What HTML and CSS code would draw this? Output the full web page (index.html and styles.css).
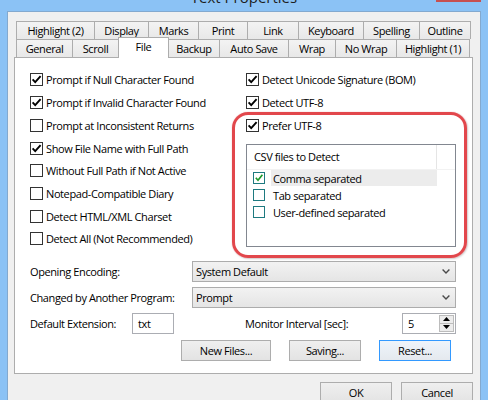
FILE: index.html
```html
<!DOCTYPE html>
<html>
<head>
<meta charset="utf-8">
<title>Text Properties</title>
<link rel="stylesheet" href="styles.css">
</head>
<body>
<div class="window">
  <div class="titlebar">
    <span class="title">Text Properties</span>
    <span class="close"></span>
  </div>
  <div class="client">
    <div class="tabctl">
      <div class="tabrow row1">
        <div class="tab w-hl2">Highlight (2)</div>
        <div class="tab w-display">Display</div>
        <div class="tab w-marks">Marks</div>
        <div class="tab w-print">Print</div>
        <div class="tab w-link">Link</div>
        <div class="tab w-keyboard">Keyboard</div>
        <div class="tab w-spelling">Spelling</div>
        <div class="tab w-outline last">Outline</div>
      </div>
      <div class="tabrow row2">
        <div class="tab w-general">General</div>
        <div class="tab w-scroll">Scroll</div>
        <div class="tab w-file selected">File</div>
        <div class="tab w-backup after-sel">Backup</div>
        <div class="tab w-autosave">Auto Save</div>
        <div class="tab w-wrap">Wrap</div>
        <div class="tab w-nowrap">No Wrap</div>
        <div class="tab w-hl1 last">Highlight (1)</div>
      </div>
      <div class="panel">
        <div class="opts">
          <div class="col">
            <div class="chk"><span class="box"><svg viewBox="0 0 11 11"><path d="M1.6 5.4 L4.2 8.2 L9.6 2.2"/></svg></span>Prompt if Null Character Found</div>
            <div class="chk"><span class="box"><svg viewBox="0 0 11 11"><path d="M1.6 5.4 L4.2 8.2 L9.6 2.2"/></svg></span>Prompt if Invalid Character Found</div>
            <div class="chk"><span class="box"></span>Prompt at Inconsistent Returns</div>
            <div class="chk"><span class="box"><svg viewBox="0 0 11 11"><path d="M1.6 5.4 L4.2 8.2 L9.6 2.2"/></svg></span>Show File Name with Full Path</div>
            <div class="chk"><span class="box"></span>Without Full Path if Not Active</div>
            <div class="chk"><span class="box"></span>Notepad-Compatible Diary</div>
            <div class="chk"><span class="box"></span>Detect HTML/XML Charset</div>
            <div class="chk"><span class="box"></span>Detect All (Not Recommended)</div>
          </div>
          <div class="col">
            <div class="chk"><span class="box"><svg viewBox="0 0 11 11"><path d="M1.6 5.4 L4.2 8.2 L9.6 2.2"/></svg></span>Detect Unicode Signature (BOM)</div>
            <div class="chk"><span class="box"><svg viewBox="0 0 11 11"><path d="M1.6 5.4 L4.2 8.2 L9.6 2.2"/></svg></span>Detect UTF-8</div>
            <div class="chk"><span class="box"><svg viewBox="0 0 11 11"><path d="M1.6 5.4 L4.2 8.2 L9.6 2.2"/></svg></span>Prefer UTF-8</div>
            <div class="listbox">
              <div class="lv-head"><span class="lv-col">CSV files to Detect</span></div>
              <div class="lv-item"><span class="lbox"><svg viewBox="0 0 10 10"><path d="M1.8 4.8 L4 7.2 L8.4 1.8"/></svg></span><span class="lv-text sel">Comma separated</span></div>
              <div class="lv-item"><span class="lbox"></span><span class="lv-text">Tab separated</span></div>
              <div class="lv-item"><span class="lbox"></span><span class="lv-text">User-defined separated</span></div>
            </div>
          </div>
        </div>
        <div class="form">
          <div class="frow">
            <span class="flabel">Opening Encoding:</span>
            <div class="combo"><span>System Default</span><svg class="chev" viewBox="0 0 8 5"><path d="M0.6 0.6 L4 4 L7.4 0.6"/></svg></div>
          </div>
          <div class="frow">
            <span class="flabel">Changed by Another Program:</span>
            <div class="combo"><span>Prompt</span><svg class="chev" viewBox="0 0 8 5"><path d="M0.6 0.6 L4 4 L7.4 0.6"/></svg></div>
          </div>
          <div class="frow">
            <span class="flabel short">Default Extension:</span>
            <div class="edit ext">txt</div>
            <span class="mlabel">Monitor Interval [sec]:</span>
            <div class="edit spin"><span class="spinval">5</span>
              <div class="spinbtns">
                <span class="sbtn"><svg viewBox="0 0 7 4"><path d="M0 4 L3.5 0 L7 4 Z"/></svg></span>
                <span class="sbtn"><svg viewBox="0 0 7 4"><path d="M0 0 L3.5 4 L7 0 Z"/></svg></span>
              </div>
            </div>
          </div>
          <div class="frow btnrow">
            <button class="btn wide">New Files...</button>
            <button class="btn">Saving...</button>
            <button class="btn focus">Reset...</button>
          </div>
        </div>
        <div class="annot"></div>
      </div>
      <div class="dlgbtns">
        <button class="btn dlg">OK</button>
        <button class="btn dlg">Cancel</button>
      </div>
    </div>
  </div>
</div>
</body>
</html>
```

FILE: styles.css
```css
* { box-sizing: border-box; }
html, body { margin: 0; padding: 0; }
body {
  background: #8bc2f5;
  width: 488px;
  height: 400px;
  overflow: hidden;
  font-family: "Segoe UI", "Open Sans", sans-serif;
  font-size: 11px;
  letter-spacing: -0.4px;
  color: #000;
}
.window { padding: 0 7px; }
.titlebar {
  height: 11px;
  margin: 0 -7px;
  display: grid;
  overflow: hidden;
}
.titlebar > * { grid-area: 1 / 1; }
.title {
  justify-self: center;
  font-size: 15px;
  line-height: 15px;
  margin-top: -10px;
  letter-spacing: 0;
  color: #1e1e1e;
}
.close {
  justify-self: end;
  align-self: start;
  width: 45px;
  height: 2px;
  margin-right: 7px;
  background: #c75050;
}
.client {
  background: #f0f0f0;
  border: 1px solid #83a9cf;
  border-bottom: 0;
  height: 400px;
  padding: 9px 7px 0 6px;
}
.tabrow {
  display: flex;
  height: 18px;
  margin-left: 2px;
}
.row2 { align-items: flex-end; }
.tab {
  height: 18px;
  border: 1px solid #adadad;
  border-right: 0;
  border-bottom: 0;
  background: linear-gradient(#f3f3f3, #e8e8e8);
  display: flex;
  align-items: center;
  justify-content: center;
  white-space: nowrap;
  line-height: 1;
}
.tab.last { border-right: 1px solid #adadad; }
.tab.selected {
  height: 21px;
  margin-bottom: -1px;
  background: #fff;
  border-right: 1px solid #adadad;
  position: relative;
  z-index: 2;
  padding-bottom: 3px;
}
.tab.after-sel { border-left: 0; }
.w-hl2 { width: 78px; }
.w-display { width: 54px; }
.w-marks { width: 50px; }
.w-print { width: 49px; }
.w-link { width: 51px; }
.w-keyboard { width: 65px; }
.w-spelling { width: 56px; }
.w-outline { width: 52px; }
.w-general { width: 56px; }
.w-scroll { width: 46px; }
.w-file { width: 51px; }
.w-backup { width: 50px; }
.w-autosave { width: 69px; }
.w-wrap { width: 47px; }
.w-nowrap { width: 61px; }
.w-hl1 { width: 74px; }

.panel {
  position: relative;
  background: #fff;
  border: 1px solid #adadad;
  padding: 10.6px 15px 12px 15px;
}
.opts {
  display: grid;
  grid-template-columns: 216px 210px;
}
.chk {
  display: flex;
  align-items: center;
  height: 22.7px;
  white-space: nowrap;
}
.box {
  width: 13px;
  height: 13px;
  border: 1px solid #333;
  background: #fff;
  margin-right: 3px;
  flex: none;
  display: flex;
}
.box svg { width: 11px; height: 11px; }
.box path { fill: none; stroke: #000; stroke-width: 1.9; }

.listbox {
  margin-top: 7.25px;
  width: 210px;
  height: 103px;
  border: 1px solid #828790;
  background: #fff;
}
.lv-head {
  height: 25px;
  display: flex;
  border-bottom: 1px solid #f2f2f2;
}
.lv-col {
  width: 190px;
  border-right: 1px solid #e5e5e5;
  padding-left: 7px;
  display: flex;
  align-items: center;
}
.lv-item {
  height: 17px;
  display: flex;
  align-items: center;
  padding-left: 6px;
}
.lbox {
  width: 12px;
  height: 12px;
  border: 1px solid #1e7a80;
  flex: none;
  display: flex;
}
.lbox svg { width: 10px; height: 10px; }
.lbox path { fill: none; stroke: #1e9a2c; stroke-width: 1.7; }
.lv-text {
  margin-left: 6px;
  width: 166px;
  height: 16px;
  padding-left: 2px;
  display: flex;
  align-items: center;
}
.lv-text.sel { background: #ececec; }

.form { margin-top: 10.8px; }
.frow {
  display: flex;
  align-items: center;
  height: 21px;
  margin-top: 5px;
  white-space: nowrap;
}
.frow:first-child { margin-top: 0; }
.flabel { width: 162px; flex: none; }
.flabel.short { width: 102px; }
.combo {
  width: 264px;
  height: 21px;
  border: 1px solid #acacac;
  background: linear-gradient(#f2f2f2, #e5e5e5);
  display: flex;
  align-items: center;
  justify-content: space-between;
  padding: 0 5px 0 3px;
}
.chev { width: 8px; height: 5px; }
.chev path { fill: none; stroke: #4a4a4a; stroke-width: 1.4; }
.edit {
  height: 21px;
  border: 1px solid #abadb3;
  background: #fff;
  display: flex;
  align-items: center;
  padding-left: 5px;
}
.ext { width: 42px; }
.mlabel { margin-left: 71px; }
.spin {
  margin-left: auto;
  margin-right: 1px;
  width: 54px;
  padding-right: 1px;
  justify-content: space-between;
}
.spinbtns {
  width: 15px;
  height: 17px;
  display: flex;
  flex-direction: column;
  border: 1px solid #bcbcbc;
  background: #ececec;
}
.sbtn {
  flex: 1;
  display: flex;
  align-items: center;
  justify-content: center;
}
.sbtn + .sbtn { border-top: 1px solid #bcbcbc; }
.sbtn svg { width: 7px; height: 4px; }
.sbtn path { fill: #000; }

.btnrow {
  margin-top: 6px;
  padding-left: 151px;
  gap: 18px;
}
.btn {
  font: inherit;
  letter-spacing: inherit;
  color: #000;
  width: 72px;
  height: 21px;
  border: 1px solid #adadad;
  background: linear-gradient(#efefef, #e3e3e3);
  padding: 0;
  margin: 0;
  display: flex;
  align-items: center;
  justify-content: center;
}
.btn.wide { width: 90px; }
.btn.focus { border-color: #3399ff; background: linear-gradient(#eef4fb, #e5e9ee); }

.annot {
  position: absolute;
  left: 217px;
  top: 54px;
  width: 235px;
  height: 146px;
  border: 3px solid #e2474c;
  border-radius: 16px;
  box-shadow: 0 0 1px rgba(226, 71, 76, 0.6), 1px 1px 2px rgba(0, 0, 0, 0.18);
  pointer-events: none;
}

.dlgbtns {
  display: flex;
  justify-content: flex-end;
  gap: 9px;
  margin-top: 8px;
}
.btn.dlg { height: 22px; width: 72px; }
```
